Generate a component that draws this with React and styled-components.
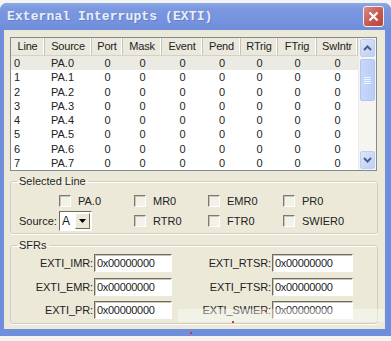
import React from 'react';
import styled, { createGlobalStyle } from 'styled-components';

const GlobalStyle = createGlobalStyle`
  html, body {
    margin: 0;
    padding: 0;
    background: #f4f4f2;
  }
  body {
    font-family: "Liberation Sans", Arial, sans-serif;
    font-size: 11px;
    color: #1a1a1a;
  }
`;

const Window = styled.div`
  position: relative;
  width: 391px;
  height: 333px;
  margin-top: 3px;
  box-sizing: border-box;
  display: flex;
  flex-direction: column;
  background: #6f8fdc;
  border-radius: 7px 7px 0 0;
  padding: 0 6px 7px 4px;
`;

const TitleBar = styled.div`
  height: 27px;
  margin: 0 -6px 0 -4px;
  padding: 0 7px 0 7px;
  display: flex;
  align-items: center;
  justify-content: space-between;
  border-radius: 7px 7px 0 0;
  background: linear-gradient(#8fa9e6 0%, #7b98e0 20%, #7492de 70%, #6e8cd8 100%);
`;

const Title = styled.span`
  font-family: "Liberation Mono", "Courier New", monospace;
  font-weight: bold;
  font-size: 13px;
  color: #e9eef9;
  letter-spacing: 0.1px;
  text-shadow: 1px 1px 0 #6680c4;
`;

const CloseButton = styled.div`
  width: 19px;
  height: 19px;
  border: 1px solid #f4f0f0;
  border-radius: 3px;
  background: linear-gradient(135deg, #d98a84, #c4554e 60%, #b8463f);
  display: flex;
  align-items: center;
  justify-content: center;
`;

const Body = styled.div`
  flex: 1;
  background: #ece9d8;
  padding: 7px 6px 0 6px;
  display: flex;
  flex-direction: column;
`;

const ListBox = styled.div`
  width: 367px;
  height: 134px;
  box-sizing: border-box;
  border: 1px solid #7f8a93;
  background: #fff;
  display: flex;
`;

const Table = styled.div`
  flex: 1;
  display: flex;
  flex-direction: column;
`;

const cols = '34px 47px 31px 39px 41px 38px 37px 39px 41px 1fr';

const HeadRow = styled.div`
  display: grid;
  grid-template-columns: ${cols};
  height: 17px;
  background: #ebe9dd;
  border-bottom: 1px solid #d6d2c2;
`;

const HeadCell = styled.div`
  display: flex;
  align-items: center;
  justify-content: center;
  border-right: 1px solid #c7c5b2;
  box-shadow: inset -1px 0 0 #fff;
  color: #222;
  letter-spacing: -0.2px;
  &:last-child {
    border-right: none;
    box-shadow: none;
  }
`;

const Row = styled.div`
  display: grid;
  grid-template-columns: ${cols};
  height: 14.4px;
  align-items: center;
  background: ${(p) => (p.$selected ? '#ecebe3' : '#fff')};
`;

const Cell = styled.div`
  text-align: ${(p) => p.$align || 'center'};
  padding-left: ${(p) => (p.$align === 'left' ? p.$indent || 3 : 0)}px;
  color: #222;
  line-height: 14px;
`;

const ScrollBar = styled.div`
  width: 17px;
  display: flex;
  flex-direction: column;
  background: #f5f4ee;
  border-left: 1px solid #eeede5;
`;

const ScrollButton = styled.div`
  height: 16px;
  margin: 1px 1px ${(p) => (p.$bottom ? 1 : 0)}px 1px;
  border-radius: 2px;
  background: linear-gradient(135deg, #dbe6fc, #bccdf6);
  border: 1px solid #c0cfee;
  display: flex;
  align-items: center;
  justify-content: center;
`;

const Thumb = styled.div`
  height: 40px;
  margin: 2px 1px 0 1px;
  border-radius: 2px;
  border: 1px solid #b3c5ef;
  background: linear-gradient(90deg, #c8d7fb, #b9cdf8);
  display: flex;
  align-items: center;
  justify-content: center;
`;

const Spacer = styled.div`
  flex: 1;
`;

const Group = styled.fieldset`
  margin: 0;
  width: 368px;
  box-sizing: border-box;
  border: 1px solid #d0cfbf;
  border-radius: 3px;
  padding: 0;
  margin-top: ${(p) => p.$top}px;
  height: ${(p) => p.$h}px;
  box-shadow: 0 1px 0 #fff, inset 0 1px 0 #fff;

  legend {
    margin-left: 6px;
    padding: 0 2px;
    color: #1f1f1f;
    font-size: 11px;
    line-height: 12px;
  }
`;

const CheckGrid = styled.div`
  display: grid;
  grid-template-columns: 47px 75px 74px 75px 75px;
  grid-auto-rows: 20px;
  align-items: center;
  padding: 4px 0 0 1px;
`;

const CheckItem = styled.label`
  display: flex;
  align-items: center;
  gap: 7px;
  color: #222;
`;

const Box = styled.span`
  width: 10px;
  height: 10px;
  background: #f2f1ea;
  border-top: 1px solid #7d7b70;
  border-left: 1px solid #7d7b70;
  border-right: 1px solid #fff;
  border-bottom: 1px solid #fff;
  box-shadow: inset 1px 1px 0 #c9c6b7;
`;

const SourceLabel = styled.span`
  padding-left: 7px;
  color: #222;
`;

const Select = styled.div`
  width: 33px;
  height: 20px;
  box-sizing: border-box;
  display: flex;
  align-items: center;
  justify-content: space-between;
  background: #fff;
  border-top: 1px solid #6d6b62;
  border-left: 1px solid #6d6b62;
  border-right: 1px solid #fff;
  border-bottom: 1px solid #fff;
  padding-left: 2px;
  font-size: 12px;
`;

const SelectArrow = styled.div`
  width: 15px;
  height: 16px;
  margin-right: 1px;
  background: #ece9d8;
  border-right: 1px solid #6d6b62;
  border-bottom: 1px solid #6d6b62;
  border-top: 1px solid #fff;
  border-left: 1px solid #fff;
  box-sizing: border-box;
  display: flex;
  align-items: center;
  justify-content: center;
`;

const SfrGrid = styled.div`
  display: grid;
  grid-template-columns: 83px 78px 100px 81px;
  grid-auto-rows: 18px;
  row-gap: 5.5px;
  align-items: center;
  padding: 3px 0 0 0;
`;

const SfrLabel = styled.span`
  text-align: right;
  padding-right: 1px;
  color: #222;
  letter-spacing: -0.1px;
`;

const SfrInput = styled.div`
  height: 18px;
  box-sizing: border-box;
  background: #fff;
  border-top: 1px solid #6d6b62;
  border-left: 1px solid #6d6b62;
  border-right: 1px solid #fff;
  border-bottom: 1px solid #fff;
  box-shadow: inset 1px 1px 0 #c9c6b7;
  padding-left: 2px;
  display: flex;
  align-items: center;
  color: #222;
  letter-spacing: -0.3px;
`;

const Glare = styled.div`
  position: absolute;
  left: 178px;
  top: 306px;
  width: 206px;
  height: 13px;
  background: rgba(255, 255, 255, 0.4);
`;

const Dot = styled.span`
  position: absolute;
  width: 2px;
  height: 2px;
  background: #d33;
`;

const headers = ['Line', 'Source', 'Port', 'Mask', 'Event', 'Pend', 'RTrig', 'FTrig', 'SwIntr', ''];

const UpArrow = () => (
  <svg width="9" height="6" viewBox="0 0 9 6">
    <path d="M1 5 L4.5 1.5 L8 5" stroke="#4d6185" strokeWidth="2" fill="none" />
  </svg>
);

const DownArrow = () => (
  <svg width="9" height="6" viewBox="0 0 9 6">
    <path d="M1 1 L4.5 4.5 L8 1" stroke="#4d6185" strokeWidth="2" fill="none" />
  </svg>
);

const Grip = () => (
  <svg width="7" height="7" viewBox="0 0 7 7">
    {[0, 2, 4, 6].map((y) => (
      <line key={y} x1="0" y1={y + 0.5} x2="7" y2={y + 0.5} stroke="#eef3fe" />
    ))}
  </svg>
);

const CheckBox = ({ label }) => (
  <CheckItem>
    <Box />
    {label}
  </CheckItem>
);

const sfrs = [
  ['EXTI_IMR:', 'EXTI_RTSR:'],
  ['EXTI_EMR:', 'EXTI_FTSR:'],
  ['EXTI_PR:', 'EXTI_SWIER:'],
];

export default function App() {
  return (
    <>
      <GlobalStyle />
      <Window>
        <TitleBar>
          <Title>External Interrupts (EXTI)</Title>
          <CloseButton>
            <svg width="11" height="11" viewBox="0 0 11 11">
              <path d="M1.5 1.5 L9.5 9.5 M9.5 1.5 L1.5 9.5" stroke="#fff" strokeWidth="2.2" />
            </svg>
          </CloseButton>
        </TitleBar>
        <Body>
          <ListBox>
            <Table>
              <HeadRow>
                {headers.map((h, i) => (
                  <HeadCell key={i}>{h}</HeadCell>
                ))}
              </HeadRow>
              {Array.from({ length: 8 }, (_, i) => (
                <Row key={i} $selected={i === 0}>
                  <Cell $align="left">{i}</Cell>
                  <Cell $align="left" $indent={6}>PA.{i}</Cell>
                  {Array.from({ length: 7 }, (_, j) => (
                    <Cell key={j}>0</Cell>
                  ))}
                  <Cell />
                </Row>
              ))}
            </Table>
            <ScrollBar>
              <ScrollButton><UpArrow /></ScrollButton>
              <Thumb><Grip /></Thumb>
              <Spacer />
              <ScrollButton $bottom><DownArrow /></ScrollButton>
            </ScrollBar>
          </ListBox>

          <Group $top={4} $h={59}>
            <legend>Selected Line</legend>
            <CheckGrid>
              <span />
              <CheckBox label="PA.0" />
              <CheckBox label="MR0" />
              <CheckBox label="EMR0" />
              <CheckBox label="PR0" />
              <SourceLabel>Source:</SourceLabel>
              <Select>
                A
                <SelectArrow>
                  <svg width="7" height="4" viewBox="0 0 7 4">
                    <path d="M0 0 H7 L3.5 4 Z" fill="#000" />
                  </svg>
                </SelectArrow>
              </Select>
              <CheckBox label="RTR0" />
              <CheckBox label="FTR0" />
              <CheckBox label="SWIER0" />
            </CheckGrid>
          </Group>

          <Group $top={5} $h={85}>
            <legend>SFRs</legend>
            <SfrGrid>
              {sfrs.map(([a, b]) => (
                <React.Fragment key={a}>
                  <SfrLabel>{a}</SfrLabel>
                  <SfrInput>0x00000000</SfrInput>
                  <SfrLabel>{b}</SfrLabel>
                  <SfrInput>0x00000000</SfrInput>
                </React.Fragment>
              ))}
            </SfrGrid>
          </Group>
        </Body>
        <Glare />
        <Dot style={{ left: 190, top: 329 }} />
        <Dot style={{ left: 265, top: 307 }} />
        <Dot style={{ left: 232, top: 318 }} />
      </Window>
    </>
  );
}
